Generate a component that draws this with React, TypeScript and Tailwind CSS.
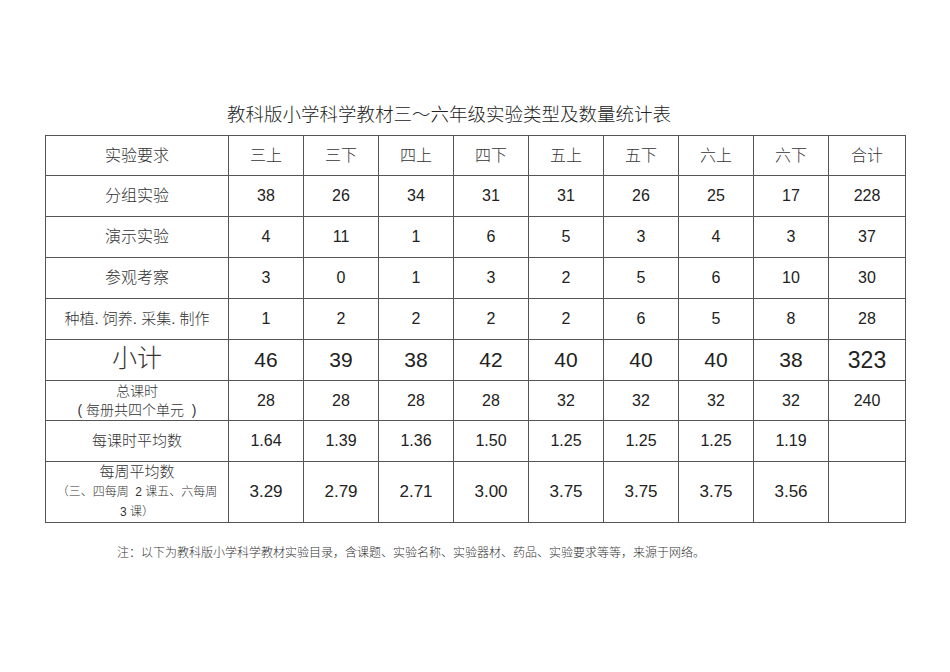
const cols = ['三上', '三下', '四上', '四下', '五上', '五下', '六上', '六下']

type Row = {
  label: React.ReactNode
  values: string[]
  h: string
  num: string
}

const rows: Row[] = [
  {
    label: <span className="text-[16px]">分组实验</span>,
    values: ['38', '26', '34', '31', '31', '26', '25', '17', '228'],
    h: 'h-[41px]',
    num: 'text-[16px]',
  },
  {
    label: <span className="text-[16px]">演示实验</span>,
    values: ['4', '11', '1', '6', '5', '3', '4', '3', '37'],
    h: 'h-[41px]',
    num: 'text-[16px]',
  },
  {
    label: <span className="text-[16px]">参观考察</span>,
    values: ['3', '0', '1', '3', '2', '5', '6', '10', '30'],
    h: 'h-[41px]',
    num: 'text-[16px]',
  },
  {
    label: <span className="text-[15px] whitespace-pre">种植. 饲养. 采集. 制作</span>,
    values: ['1', '2', '2', '2', '2', '6', '5', '8', '28'],
    h: 'h-[41px]',
    num: 'text-[16px]',
  },
  {
    label: <span className="text-[25px] leading-none">小计</span>,
    values: ['46', '39', '38', '42', '40', '40', '40', '38', '323'],
    h: 'h-[41px]',
    num: 'text-[21px]',
  },
  {
    label: (
      <span className="flex flex-col items-center text-[14px] leading-[19px]">
        <span>总课时</span>
        <span className="whitespace-pre">( 每册共四个单元  )</span>
      </span>
    ),
    values: ['28', '28', '28', '28', '32', '32', '32', '32', '240'],
    h: 'h-[40px]',
    num: 'text-[16px]',
  },
  {
    label: <span className="text-[15px]">每课时平均数</span>,
    values: ['1.64', '1.39', '1.36', '1.50', '1.25', '1.25', '1.25', '1.19', ''],
    h: 'h-[41px]',
    num: 'text-[16px]',
  },
  {
    label: (
      <span className="flex flex-col items-center leading-[20px]">
        <span className="text-[15px]">每周平均数</span>
        <span className="text-[12px] whitespace-pre">（三、四每周  2 课五、六每周</span>
        <span className="text-[12px] whitespace-pre">3 课）</span>
      </span>
    ),
    values: ['3.29', '2.79', '2.71', '3.00', '3.75', '3.75', '3.75', '3.56', ''],
    h: 'h-[60px]',
    num: 'text-[17px]',
  },
]

export default function App() {
  return (
    <div
      className="w-[950px] h-[672px] bg-white text-[#222]"
      style={{ fontFamily: '"Liberation Sans", "Noto Sans CJK SC", sans-serif' }}
    >
      <div className="pt-[104px] flex flex-col">
        <h1 className="pl-[227px] text-[18.5px] leading-[22px] font-light text-[#222]">
          教科版小学科学教材三～六年级实验类型及数量统计表
        </h1>
        <div className="pl-[45px] pt-[9px]">
          <table className="table-fixed border-collapse w-[860px] text-center">
            <colgroup>
              <col className="w-[183px]" />
              {cols.map((c) => (
                <col key={c} className="w-[75px]" />
              ))}
              <col className="w-[77px]" />
            </colgroup>
            <tbody>
              <tr className="h-[40px]">
                <td className="border border-[#555] text-[16px] font-light text-[#333]">实验要求</td>
                {cols.map((c) => (
                  <td key={c} className="border border-[#555] text-[16px] font-light text-[#333]">
                    {c}
                  </td>
                ))}
                <td className="border border-[#555] text-[16px] font-light text-[#333]">合计</td>
              </tr>
              {rows.map((r, i) => (
                <tr key={i} className={r.h}>
                  <td className="border border-[#555] font-light text-[#333] p-0 align-middle">{r.label}</td>
                  {r.values.map((v, j) => (
                    <td
                      key={j}
                      className={`border border-[#555] p-0 align-middle ${
                        i === 4 && j === 8 ? 'text-[23px]' : r.num
                      }`}
                    >
                      {v}
                    </td>
                  ))}
                </tr>
              ))}
            </tbody>
          </table>
        </div>
        <p className="pl-[117px] pt-[22px] text-[12px] leading-[16px] font-light text-[#333]">
          注：以下为教科版小学科学教材实验目录，含课题、实验名称、实验器材、药品、实验要求等等，来源于网络。
        </p>
      </div>
    </div>
  )
}
